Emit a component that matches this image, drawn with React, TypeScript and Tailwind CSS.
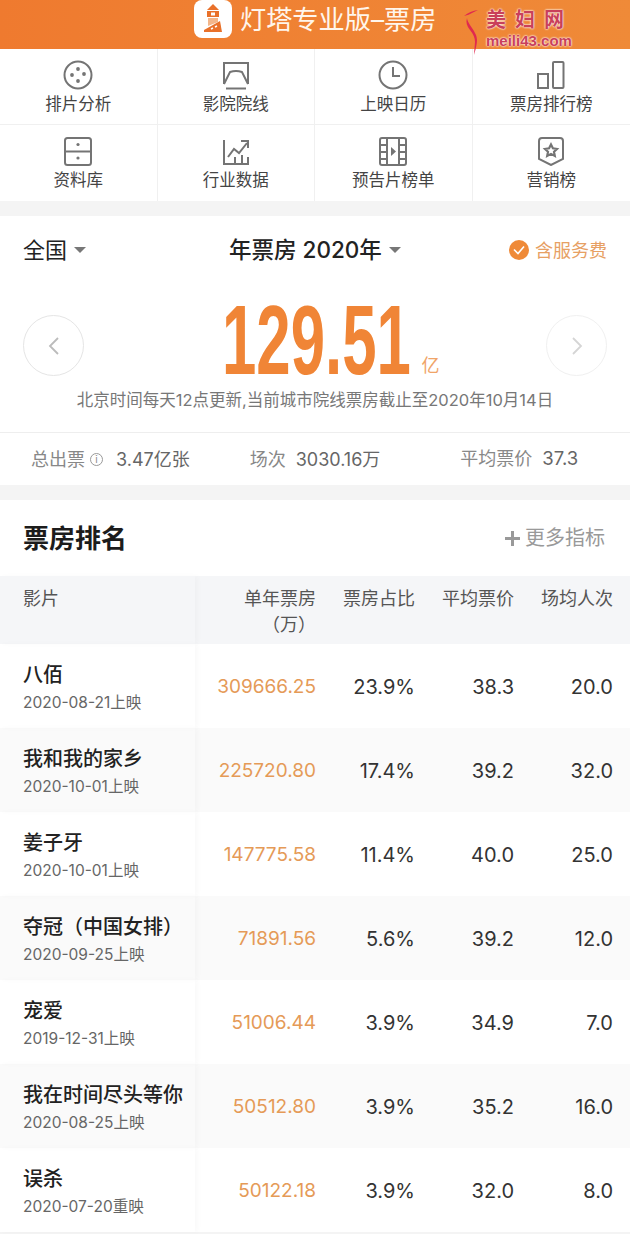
const F = "font-['Inter','Noto_Sans_CJK_SC',sans-serif]";
const S = { fill: "none", stroke: "#747474", strokeWidth: 2 };
const D = { fill: "#747474", stroke: "none" };

const icons = [
  <svg width="30" height="30" viewBox="0 0 30 30" {...S}><circle cx="15" cy="15" r="13.500" /><circle cx="15" cy="9" r="1.900" {...D} /><circle cx="9" cy="15" r="1.900" {...D} /><circle cx="21" cy="14" r="1.900" {...D} /><circle cx="15" cy="21" r="1.900" {...D} /></svg>,
  <svg width="30" height="30" viewBox="0 0 30 30" {...S}><path d="M3 24V3h24v21" /><path d="M3 24l6-12q6-2 12 0l6 12" /><path d="M5 28.500h20" /></svg>,
  <svg width="30" height="30" viewBox="0 0 30 30" {...S}><circle cx="15" cy="15" r="13.500" /><path d="M15 7v9h7" /></svg>,
  <svg width="30" height="30" viewBox="0 0 30 30" {...S}><rect x="2" y="14" width="10" height="14" /><rect x="17" y="2" width="10.500" height="26" rx="1" /></svg>,
  <svg width="30" height="30" viewBox="0 0 30 30" {...S}><rect x="2" y="2" width="26" height="27" rx="2.500" /><path d="M2 15.500h26" /><circle cx="15" cy="8.500" r="1.600" {...D} /><circle cx="15" cy="22" r="1.600" {...D} /></svg>,
  <svg width="30" height="30" viewBox="0 0 30 30" {...S}><path d="M3 4v24h24v-7" /><path d="M7 21l6-8 5 4 8-10" /><path d="M20 5h7v7" /><path d="M14 21v7M21 19v9" /></svg>,
  <svg width="30" height="30" viewBox="0 0 30 30" {...S}><rect x="2" y="2" width="26" height="27" rx="2" /><path d="M9 2v27M21 2v27M2 9h7M2 16h7M2 23h7M21 9h7M21 16h7M21 23h7" /><path d="M13 11l5 4.500-5 4.500z" {...D} /></svg>,
  <svg width="30" height="30" viewBox="0 0 30 30" {...S}><path d="M3 5q0-3 3-3h18q3 0 3 3v18l-12 6-12-6z" /><path d="M15 8.500l1.900 3.800 4.100.6-3 2.900.8 4.100-3.800-2-3.800 2 .8-4.100-3-2.900 4.100-.6z" strokeWidth="2.200" /></svg>,
];
const nav = ["排片分析", "影院院线", "上映日历", "票房排行榜", "资料库", "行业数据", "预告片榜单", "营销榜"];
const rows = [
  ["八佰", "2020-08-21上映", "309666.25", "23.9%", "38.3", "20.0"],
  ["我和我的家乡", "2020-10-01上映", "225720.80", "17.4%", "39.2", "32.0"],
  ["姜子牙", "2020-10-01上映", "147775.58", "11.4%", "40.0", "25.0"],
  ["夺冠（中国女排）", "2020-09-25上映", "71891.56", "5.6%", "39.2", "12.0"],
  ["宠爱", "2019-12-31上映", "51006.44", "3.9%", "34.9", "7.0"],
  ["我在时间尽头等你", "2020-08-25上映", "50512.80", "3.9%", "35.2", "16.0"],
  ["误杀", "2020-07-20重映", "50122.18", "3.9%", "32.0", "8.0"],
];
const Caret = () => <span className="inline-block w-0 h-0 border-x-[6px] border-x-transparent border-t-[6px] border-t-[#777]" />;

export default function App() {
  return (
    <div className={`${F} w-[630px] h-[1234px] overflow-hidden bg-[#f4f4f4] antialiased`}>
      <header className="relative z-10 h-[49px] flex items-center pl-[194px] gap-[8px] bg-gradient-to-r from-[#ef7a2f] to-[#ef8a38]">
        <div className="w-[38px] h-[38px] -mt-[11px] rounded-[8px] bg-white flex items-center justify-center">
          <svg width="24" height="32" viewBox="0 0 24 32"><path d="M12 1l6 6H6z" fill="#e9712a" /><rect x="6" y="8" width="12" height="6" fill="#e9712a" /><rect x="10" y="9.500" width="4" height="3" fill="#fff" /><path d="M7 15h10v4L7 23z" fill="#f3b68a" /><path d="M3 27l16-9 2 11H3z" fill="#e9712a" /><path d="M10 26l2-1M14 24l2-1" stroke="#fff" strokeWidth="1.500" /></svg>
        </div>
        <span className="text-[26.200px] leading-none text-[#fff6ec] -mt-[8px]">灯塔专业版–票房</span>
        <div className="absolute left-[462px] top-[9px] w-[112px]">
          <svg className="absolute left-0 top-0" width="20" height="50" viewBox="0 0 20 50"><path d="M16 1Q8 2 2 7q5-1 8-3z" fill="#e0294f" /><path d="M5 9q-2 6 3 12t5 12l-1 13q3-10 3-15T10 19 5 9z" fill="#e0294f" /></svg>
          <div className="pl-[24px] text-[20px] leading-[22px] tracking-[9px] whitespace-nowrap text-[#c9405a] font-bold [text-shadow:0_0_2px_#fff,0_0_2px_#fff]">美妇网</div>
          <div className="pl-[24px] font-['Liberation_Sans'] text-[15px] leading-[20px] text-[#c9405a] font-bold [text-shadow:0_0_2px_#fff,0_0_2px_#fff]">meili43.com</div>
        </div>
      </header>

      <nav className="grid grid-cols-4 bg-white">
        {nav.map((n, i) => (
          <div key={n} className={`h-[76px] flex flex-col items-center pt-[11px] ${i % 4 !== 3 ? "border-r border-[#f0f0f0]" : ""} ${i < 4 ? "border-b border-[#f0f0f0]" : ""}`}>
            {icons[i]}
            <span className="mt-[2px] text-[16.500px] leading-[24px] text-[#444]">{n}</span>
          </div>
        ))}
      </nav>

      <section className="mt-[15px] bg-white">
        <div className="h-[70px] pb-[2px] px-[23px] grid grid-cols-3 items-center">
          <div className="flex items-center gap-[7px] text-[22px] text-[#222]">全国<Caret /></div>
          <div className="justify-self-center whitespace-nowrap flex items-center gap-[7px] text-[22.500px] text-[#222] font-medium">年票房 2020年<Caret /></div>
          <div className="justify-self-end flex items-center gap-[6px] text-[18px] text-[#e7a063]">
            <span className="w-[20px] h-[20px] rounded-full bg-[#ef8a38] flex items-center justify-center">
              <svg width="12" height="10" viewBox="0 0 12 10" fill="none" stroke="#fff" strokeWidth="1.600"><path d="M1 4.500l4 4 6-7" /></svg>
            </span>
            含服务费
          </div>
        </div>
        <div className="mt-[19px] h-[71px] px-[23px] flex items-end justify-between">
          <div className="w-[61px] h-[61px] rounded-full border border-[#e5e5e5] flex items-center justify-center">
            <svg width="12" height="20" viewBox="0 0 12 20" fill="none" stroke="#bbb" strokeWidth="1.800"><path d="M10 2L2 10l8 8" /></svg>
          </div>
          <div className="ml-[34px] flex items-end">
            <div className="w-[186px] h-[71px]">
              <div className="-ml-[3px] font-['Liberation_Sans'] text-[#f08536] font-bold text-[98px] leading-[71px] whitespace-nowrap origin-top-left [transform:scaleX(0.63)]">129.51</div>
            </div>
            <span className="ml-[11px] text-[18px] leading-[20px] text-[#f0a468]">亿</span>
          </div>
          <div className="w-[61px] h-[61px] rounded-full border border-[#f0f0f0] flex items-center justify-center">
            <svg width="12" height="20" viewBox="0 0 12 20" fill="none" stroke="#d5d5d5" strokeWidth="1.800"><path d="M2 2l8 8-8 8" /></svg>
          </div>
        </div>
        <p className="mt-[12px] h-[44px] text-center text-[16.500px] leading-[24px] whitespace-nowrap text-[#777]">北京时间每天12点更新,当前城市院线票房截止至2020年10月14日</p>
        <div className="h-[53px] border-t border-[#eee] flex items-center text-[18px] text-[#888] whitespace-nowrap">
          <div className="ml-[31px] flex items-center">
            总出票
            <span className="ml-[5px] w-[13px] h-[13px] rounded-full border border-[#999] text-[10px] leading-[11px] text-center">i</span>
            <span className="ml-[13px] text-[18px] text-[#666]">3.47亿张</span>
          </div>
          <div className="ml-[60px]">场次<span className="ml-[10px] text-[18px] text-[#666]">3030.16万</span></div>
          <div className="ml-[80px]">平均票价<span className="ml-[10px] text-[18.500px] text-[#666]">37.3</span></div>
        </div>
      </section>

      <section className="mt-[15px] bg-white">
        <div className="h-[76px] px-[23px] flex items-center justify-between">
          <h2 className="text-[26px] mt-[1px] font-bold text-[#1c1c1c]">票房排名</h2>
          <div className="flex items-center gap-[5px] text-[20px] text-[#999] mr-[2px]">
            <svg width="15" height="15" viewBox="0 0 15 15" fill="#999"><path d="M6 0h3v6h6v3H9v6H6V9H0V6h6z" /></svg>
            更多指标
          </div>
        </div>
        <div className="flex h-[68px] bg-[#f5f6f8] text-[18px] leading-[26px] text-[#555]">
          <div className="w-[195px] h-full pl-[23px] pt-[10px] shadow-[3px_0_5px_rgba(0,0,0,0.025)]">影片</div>
          <div className="w-[121px] pt-[10px] text-right">单年票房<br />（万）</div>
          <div className="w-[99px] pt-[10px] text-right">票房占比</div>
          <div className="w-[99px] pt-[10px] text-right">平均票价</div>
          <div className="w-[99px] pt-[10px] text-right">场均人次</div>
        </div>
        {rows.map((r, i) => (
          <div key={r[0]} className={`flex h-[84px] items-center text-[20px] text-[#333] ${i % 2 ? "bg-[#fafafa]" : "bg-white"}`}>
            <div className="w-[195px] h-full pl-[23px] pt-[17px] shadow-[3px_0_5px_rgba(0,0,0,0.025)]">
              <div className="text-[20px] leading-[28px] font-medium text-[#222] whitespace-nowrap">{r[0]}</div>
              <div className="mt-[3px] text-[15.500px] leading-[22px] text-[#666] whitespace-nowrap">{r[1]}</div>
            </div>
            <div className="w-[121px] mt-[2px] text-right text-[19px] text-[#e59a57]">{r[2]}</div>
            <div className="w-[99px] mt-[2px] text-right">{r[3]}</div>
            <div className="w-[99px] mt-[2px] text-right">{r[4]}</div>
            <div className="w-[99px] mt-[2px] text-right">{r[5]}</div>
          </div>
        ))}
      </section>
    </div>
  );
}
